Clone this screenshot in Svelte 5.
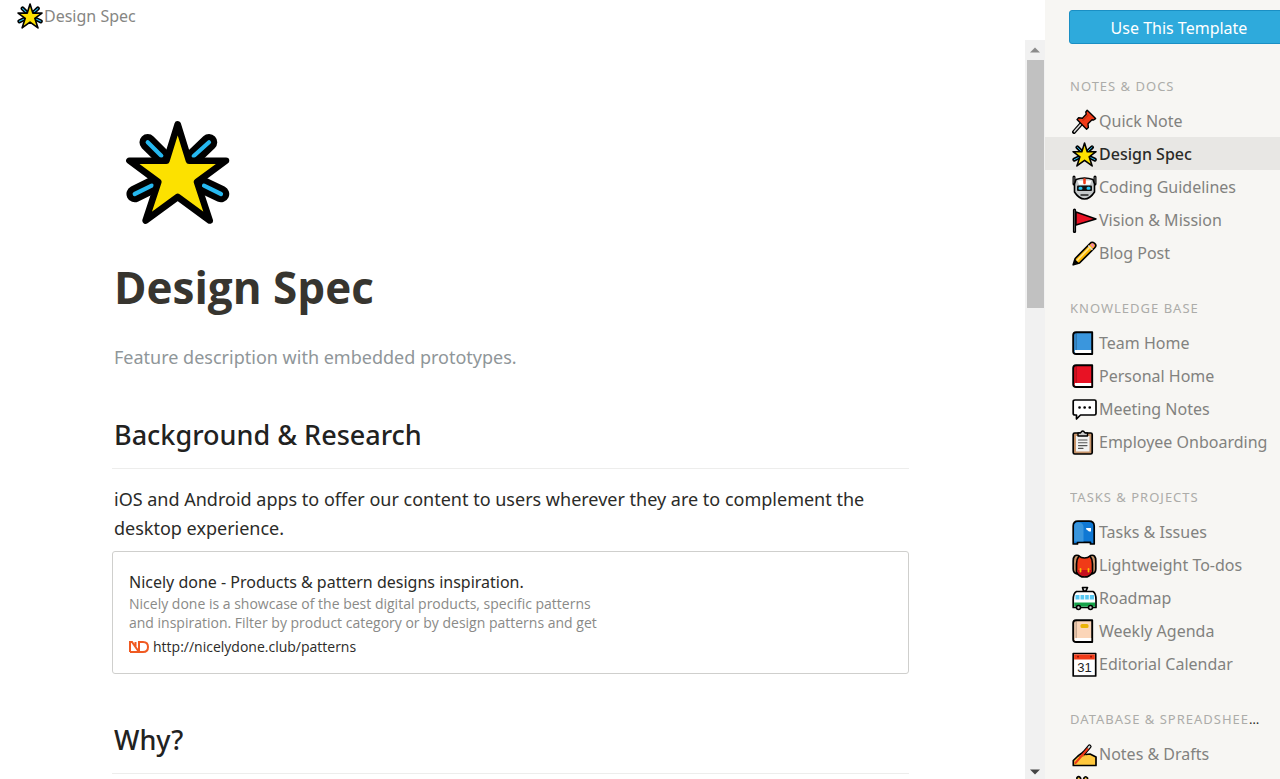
<script lang="ts">
  interface Template {
    name: string;
    icon: string;
  }

  interface TemplateGroup {
    title: string;
    items: Template[];
  }

  const groups: TemplateGroup[] = [
    {
      title: 'Notes & Docs',
      items: [
        { name: 'Quick Note', icon: 'pin' },
        { name: 'Design Spec', icon: 'star' },
        { name: 'Coding Guidelines', icon: 'robot' },
        { name: 'Vision & Mission', icon: 'flag' },
        { name: 'Blog Post', icon: 'pencil' }
      ]
    },
    {
      title: 'Knowledge Base',
      items: [
        { name: 'Team Home', icon: 'blue-book' },
        { name: 'Personal Home', icon: 'red-book' },
        { name: 'Meeting Notes', icon: 'speech' },
        { name: 'Employee Onboarding', icon: 'clipboard' }
      ]
    },
    {
      title: 'Tasks & Projects',
      items: [
        { name: 'Tasks & Issues', icon: 'mailbox' },
        { name: 'Lightweight To-dos', icon: 'backpack' },
        { name: 'Roadmap', icon: 'trolley' },
        { name: 'Weekly Agenda', icon: 'notebook' },
        { name: 'Editorial Calendar', icon: 'calendar' }
      ]
    },
    {
      title: 'Database & Spreadsheets',
      items: [
        { name: 'Notes & Drafts', icon: 'writing' },
        { name: 'Monthly Schedule', icon: 'victory' }
      ]
    }
  ];

  let selected = $state('Design Spec');
</script>

{#snippet star()}
  <svg class="icon" viewBox="0 0 105 105" aria-hidden="true">
    <g fill="none" stroke-linecap="round">
      <path
        d="M22.7 22.3 40 39.5M84 22.3 66 39.5M9.7 74 30 64M96 74 75 64"
        stroke="#000"
        stroke-width="16.5"
      />
      <path
        d="M22.7 22.3 36.3 35.7M84 22.3 68.7 36M9.7 74 26.7 65.7M96 74 79 65.7"
        stroke="#26b8f0"
        stroke-width="4.2"
      />
    </g>
    <path
      d="M52.7 4.3 64 40.7H101L72 62 84.7 100.5 52.7 77 20.6 100.5 33.3 62 4.4 40.7H41.4Z"
      fill="#fce100"
      stroke="#000"
      stroke-width="6.6"
      stroke-linejoin="round"
    />
  </svg>
{/snippet}

{#snippet book(cover: string)}
  <path d="M4 1.2H20.2V23H4Q1.2 23 1.2 20.5V4Q1.2 1.2 4 1.2Z" fill={cover} stroke="#000" stroke-width="1.9" />
  <path d="M3 19H19.200V22H3.5Q2.2 21 3 19Z" fill="#fff" />
  <path d="M4.2 2.5V18.6" stroke="#000" stroke-opacity=".25" stroke-width="1.2" />
{/snippet}

{#snippet icon(name: string)}
  {#if name === 'star'}
    {@render star()}
  {:else}
    <svg class="icon" viewBox="0 0 25 25" fill="none" stroke-linejoin="round" stroke-linecap="round" aria-hidden="true">
      {#if name === 'pin'}
        <path d="M2 23 9.5 14.5" stroke="#000" stroke-width="4" />
        <path d="M2.4 22.6 9 15" stroke="#ddd" stroke-width="1.5" />
        <path
          d="M15.2 1.2 23.6 9.6 21.6 11 20 10.8 16 14.8 16.4 18.6 14.6 20.2 5 10.6 6.6 8.8 10.4 9.2 14.2 5.2 13.8 3Z"
          fill="#f03a17"
          stroke="#000"
          stroke-width="1.4"
        />
        <path d="M16 6.4 11 11.4" stroke="#c9300f" stroke-width="1.2" />
      {:else if name === 'robot'}
        <path d="M2 2V9M23 2V9" stroke="#000" stroke-width="3" />
        <path d="M2 2.5V8M23 2.5V8" stroke="#777" stroke-width="1" />
        <path
          d="M4 4.5Q12.5 1.5 21 4.5L22.5 9V17Q18 24 12.5 24T2.5 17V9Z"
          fill="#c5c9ca"
          stroke="#000"
          stroke-width="1.6"
        />
        <path d="M5.5 5.500H19.5L18 9.800H7Z" fill="#fff" />
        <path d="M12.5 4.5V8" stroke="#f03a17" stroke-width="2.6" />
        <rect x="5" y="10.5" width="15" height="5.5" rx="1" fill="#111" />
        <path d="M8 13.2H9M16 13.2H17" stroke="#29c5f6" stroke-width="3" />
        <path d="M9 20H16" stroke="#222" stroke-width="1.4" />
      {:else if name === 'flag'}
        <path d="M4 4 24 11 4 17Z" fill="#e81224" stroke="#000" stroke-width="1.4" />
        <path d="M2.5 2V23.5" stroke="#000" stroke-width="3.2" />
        <path d="M2.5 2.5V23" stroke="#777" stroke-width=".6" />
      {:else if name === 'pencil'}
        <path d="M1.2 23.8 3.2 17.5 18 2.5Q20 .5 22.6 2.4T22.5 7L7.5 22Z" fill="#ffb900" stroke="#000" stroke-width="1.7" />
        <path d="M5 19.5 17.5 6.5" stroke="#ffe38a" stroke-width="1.6" />
        <path d="M18.2 3.8 19.8 2.3Q21.3 1.8 22 3.2T21.8 6.2L21 7Z" fill="#f58ba0" />
        <path d="M16.7 5 20 8.4" stroke="#ddd" stroke-width="1.5" />
        <path d="M1.5 23.5 3.2 18.5 6.5 21.8Z" fill="#000" />
      {:else if name === 'blue-book'}
        {@render book('#3a96dd')}
      {:else if name === 'red-book'}
        {@render book('#e81224')}
      {:else if name === 'speech'}
        <path d="M3 3H22.5Q24 3 24 4.5V16.5Q24 18 22.5 18H8.5L4.5 22V18H3Q1.2 18 1.2 16.5V4.5Q1.2 3 3 3Z" fill="#fff" stroke="#000" stroke-width="1.7" />
        <path d="M7.5 10.5H7.6M12.6 10.5H12.7M17.7 10.5H17.8" stroke="#000" stroke-width="2.6" />
      {:else if name === 'clipboard'}
        <rect x="1.2" y="3" width="19" height="21" rx="1.5" fill="#c7946a" stroke="#000" stroke-width="1.7" />
        <path d="M4 6H17.5V21.5H4Z" fill="#f3f3f3" />
        <path d="M6.5 10H15M6.5 12.8H15M6.5 15.6H15M6.5 18.4H11" stroke="#555" stroke-width="1.1" />
        <path d="M6 3H8.5Q10.7 -1 13 3H15.5V6H6Z" fill="#ccc" stroke="#000" stroke-width="1.4" />
      {:else if name === 'mailbox'}
        <path d="M1.2 24V6Q1.2 1.2 6 1.2H17Q22.2 1.2 22.2 6V24H18.5V22.3H5.5V24Z" fill="#0f78d4" stroke="#000" stroke-width="1.7" />
        <path d="M2.2 22V6Q2.5 2.2 6.5 2.2 11.5 3 11.5 7V21.5H2.2Z" fill="#3a96dd" />
        <path d="M14 8H19V11.5H17L14.5 9.5Z" fill="#fff" />
      {:else if name === 'backpack'}
        <path d="M6.5 2.5Q1.2 1 1.2 8V16Q1.2 20 5 21M18.5 2.5Q23.8 1 23.8 8V16Q23.8 20 20 21" fill="#c7946a" stroke="#000" stroke-width="1.7" />
        <path d="M7 3Q9 5 12.5 5T18 3Q20.5 6 20.5 11V19Q18 24 12.5 24T4.5 19V11Q4.5 6 7 3Z" fill="#f03a17" stroke="#000" stroke-width="1.7" />
        <path d="M5.5 17H19.5V19Q17 23 12.5 23T5.5 19Z" fill="#c50f1f" />
        <path d="M8.5 16V18.5M16.5 16V18.5" stroke="#ffb900" stroke-width="1.8" />
      {:else if name === 'trolley'}
        <path d="M10.5 1.5H15.5L14 5H11.5Z" fill="#ddd" stroke="#000" stroke-width="1.7" />
        <path d="M4.5 5.5H21Q24 7 24 14V21.5H1.2V14Q1.2 7 4.5 5.5Z" fill="#fff" stroke="#000" stroke-width="1.7" />
        <path d="M2.2 16.5H23V20.7H2.2Z" fill="#16a34a" />
        <path d="M3.5 9H22V13.5H3.5Z" fill="#58c8f2" />
        <path d="M8 9V13.5M12.7 9V13.5M17.3 9V13.5" stroke="#fff" stroke-width="1" />
        <circle cx="6.5" cy="21.5" r="2" fill="#ccc" stroke="#000" stroke-width="1.6" />
        <circle cx="18.5" cy="21.5" r="2" fill="#ccc" stroke="#000" stroke-width="1.6" />
      {:else if name === 'notebook'}
        {@render book('#fbd5b8')}
        <rect x="8.5" y="5" width="8" height="4" rx="1.5" fill="#eab308" />
      {:else if name === 'calendar'}
        <rect x="1.2" y="1.5" width="22.5" height="22.5" fill="#fff" stroke="#000" stroke-width="1.7" />
        <path d="M2.1 2.4H22.8V7.5H2.1Z" fill="#f03a17" />
        <path d="M6 4.7H6.1M19 4.7H19.1" stroke="#8b1208" stroke-width="1.8" />
        <text x="12.5" y="20" text-anchor="middle" class="day">31</text>
      {:else if name === 'writing'}
        <path d="M1.3 23.5V18.5L6 14 11.5 10 14 12.5 18 12 24 15V23.5Z" fill="#ffc83d" stroke="#000" stroke-width="1.7" />
        <path d="M8 14.5 12.5 13" stroke="#c27d1a" stroke-width="2" />
        <path d="M12 11 17.5 4.5" stroke="#000" stroke-width="4.2" />
        <path d="M3.5 21 15.5 7" stroke="#f03a17" stroke-width="2" />
        <path d="M16.5 5.7 17.5 4.5" stroke="#ddd" stroke-width="1.8" />
      {:else if name === 'victory'}
        <path
          d="M5 2.5Q7 .5 8.5 3L10 9 12 3Q13.5 .5 15.5 3V12L18.5 15Q18 24 11 24T4 15Z"
          fill="#ffc83d"
          stroke="#000"
          stroke-width="1.7"
        />
      {/if}
    </svg>
  {/if}
{/snippet}

<div class="layout">
  <main class="preview">
    <header class="topbar">
      <span class="topbar-icon">{@render star()}</span>
      <span>Design Spec</span>
    </header>

    <div class="scroll-area">
      <article class="page">
        <div class="page-icon">{@render star()}</div>
        <h1>Design Spec</h1>
        <p class="description">Feature description with embedded prototypes.</p>

        <h2>Background &amp; Research</h2>
        <p class="text">
          iOS and Android apps to offer our content to users wherever they are to complement the
          desktop experience.
        </p>
        <a class="bookmark" href="http://nicelydone.club/patterns">
          <span class="bookmark-title">Nicely done - Products &amp; pattern designs inspiration.</span>
          <span class="bookmark-text">
            Nicely done is a showcase of the best digital products, specific patterns and
            inspiration. Filter by product category or by design patterns and get
          </span>
          <span class="bookmark-link">
            <svg class="bookmark-logo" viewBox="0 0 20 12" aria-hidden="true">
              <path
                d="M1 11V1H3L10 11V1H14Q19 1 19 6T14 11H1M6.5 1V6"
                fill="none"
                stroke="#f05a22"
                stroke-width="2"
              />
            </svg>
            http://nicelydone.club/patterns
          </span>
        </a>

        <h2>Why?</h2>
      </article>

      <div class="scrollbar">
        <button class="scroll-button" aria-label="Scroll up">
          <svg viewBox="0 0 10 6"><path d="M0 5.5 5 .5 10 5.5Z" fill="#8b8b8b" /></svg>
        </button>
        <div class="scroll-thumb"></div>
        <button class="scroll-button scroll-down" aria-label="Scroll down">
          <svg viewBox="0 0 10 6"><path d="M0 .5H10L5 5.5Z" fill="#444" /></svg>
        </button>
      </div>
    </div>
  </main>

  <aside class="sidebar">
    <button class="use-button">Use This Template</button>

    {#each groups as group}
      <section class="group">
        <h3><span>{group.title}</span></h3>
        {#each group.items as item}
          <button
            class="item"
            class:selected={item.name === selected}
            onclick={() => (selected = item.name)}
          >
            {@render icon(item.icon)}
            <span>{item.name}</span>
          </button>
        {/each}
      </section>
    {/each}
  </aside>
</div>

<style>
  :global(body) {
    background: #fff;
    overflow: hidden;
  }

  .layout {
    display: flex;
    height: 100vh;
    overflow: hidden;
    font-family: 'Noto Sans', 'Open Sans', sans-serif;
    font-size: 16px;
    color: #2b2b28;
  }

  button {
    font: inherit;
    border: none;
    cursor: pointer;
  }

  h1,
  h2,
  h3,
  p {
    margin: 0;
  }

  .icon {
    display: block;
    width: 100%;
    height: auto;
  }

  .preview {
    flex: 1;
    min-width: 0;
    display: flex;
    flex-direction: column;
  }

  .topbar {
    flex: none;
    display: flex;
    align-items: center;
    gap: 1px;
    height: 32px;
    padding: 0 17px 8px;
    color: #868683;
  }

  .topbar-icon {
    width: 26px;
  }

  .scroll-area {
    flex: 1;
    min-height: 0;
    display: flex;
  }

  .page {
    flex: 1;
    min-width: 0;
    padding: 80px 116px 0 112px;
    overflow: hidden;
  }

  .page-icon {
    width: 105px;
    margin-left: 13px;
  }

  h1 {
    margin-top: 32px;
    padding-left: 2px;
    font-family: 'Open Sans', sans-serif;
    font-size: 44px;
    line-height: 60px;
    font-weight: 700;
    color: #37352f;
  }

  .description {
    margin-top: 26px;
    padding-left: 2px;
    font-size: 18px;
    line-height: 28px;
    color: #8f9699;
  }

  h2 {
    margin-top: 44px;
    padding: 0 2px 13px;
    border-bottom: 1px solid #ededec;
    font-size: 27px;
    line-height: 40px;
    font-weight: 500;
    color: #22221f;
  }

  .text {
    margin-top: 16px;
    padding: 0 2px;
    font-size: 18px;
    line-height: 29px;
  }

  .bookmark {
    display: flex;
    flex-direction: column;
    margin: 8px 0 46px;
    padding: 18px 16px 16px;
    border: 1px solid #cfcfcd;
    border-radius: 3px;
    color: #2b2b28;
    text-decoration: none;
  }

  .bookmark-title {
    line-height: 24px;
  }

  .bookmark-text {
    max-width: 480px;
    font-family: 'Open Sans', sans-serif;
    font-size: 14px;
    line-height: 19px;
    color: #8a8a87;
  }

  .bookmark-link {
    display: flex;
    align-items: center;
    gap: 4px;
    margin-top: 5px;
    font-family: 'Open Sans', sans-serif;
    font-size: 14px;
    line-height: 20px;
  }

  .bookmark-logo {
    width: 20px;
    height: 12px;
  }

  .scrollbar {
    flex: none;
    display: flex;
    flex-direction: column;
    width: 20px;
    background: #f1f1f1;
  }

  .scroll-button {
    height: 20px;
    padding: 0;
    background: none;
    line-height: 0;
  }

  .scroll-button svg {
    width: 10px;
    height: 6px;
  }

  .scroll-thumb {
    height: 248px;
    margin: 0 1px 0 2px;
    background: #c1c1c1;
  }

  .scroll-down {
    height: 14px;
    margin-top: auto;
  }

  .sidebar {
    flex: none;
    width: 235px;
    overflow: hidden;
    background: #f7f6f3;
  }

  .use-button {
    display: block;
    width: 220px;
    height: 34px;
    margin: 10px 0 33px 24px;
    padding: 2px 0 0;
    border: 1px solid #1a8fc4;
    border-radius: 3px;
    background: #2eaadc;
    color: #fff;
  }

  .group {
    margin-bottom: 30px;
  }

  h3 {
    margin: 0 20px 9px 25px;
    font-size: 13px;
    line-height: 18px;
    font-weight: 400;
    letter-spacing: 1px;
    text-transform: uppercase;
    white-space: nowrap;
    overflow: hidden;
    text-overflow: ellipsis;
  }

  h3 span {
    color: #acaca9;
  }

  .item {
    display: flex;
    align-items: center;
    gap: 2px;
    width: 100%;
    height: 33px;
    padding: 0 0 0 27px;
    background: none;
    color: #82827f;
    text-align: left;
    white-space: nowrap;
  }

  .item :global(.icon) {
    flex: none;
    width: 25px;
    padding-top: 2px;
  }

  .selected {
    background: #e8e7e4;
    color: #2b2b28;
    font-weight: 500;
  }

  .day {
    font: 400 13px 'Liberation Sans', sans-serif;
    fill: #222;
  }
</style>
